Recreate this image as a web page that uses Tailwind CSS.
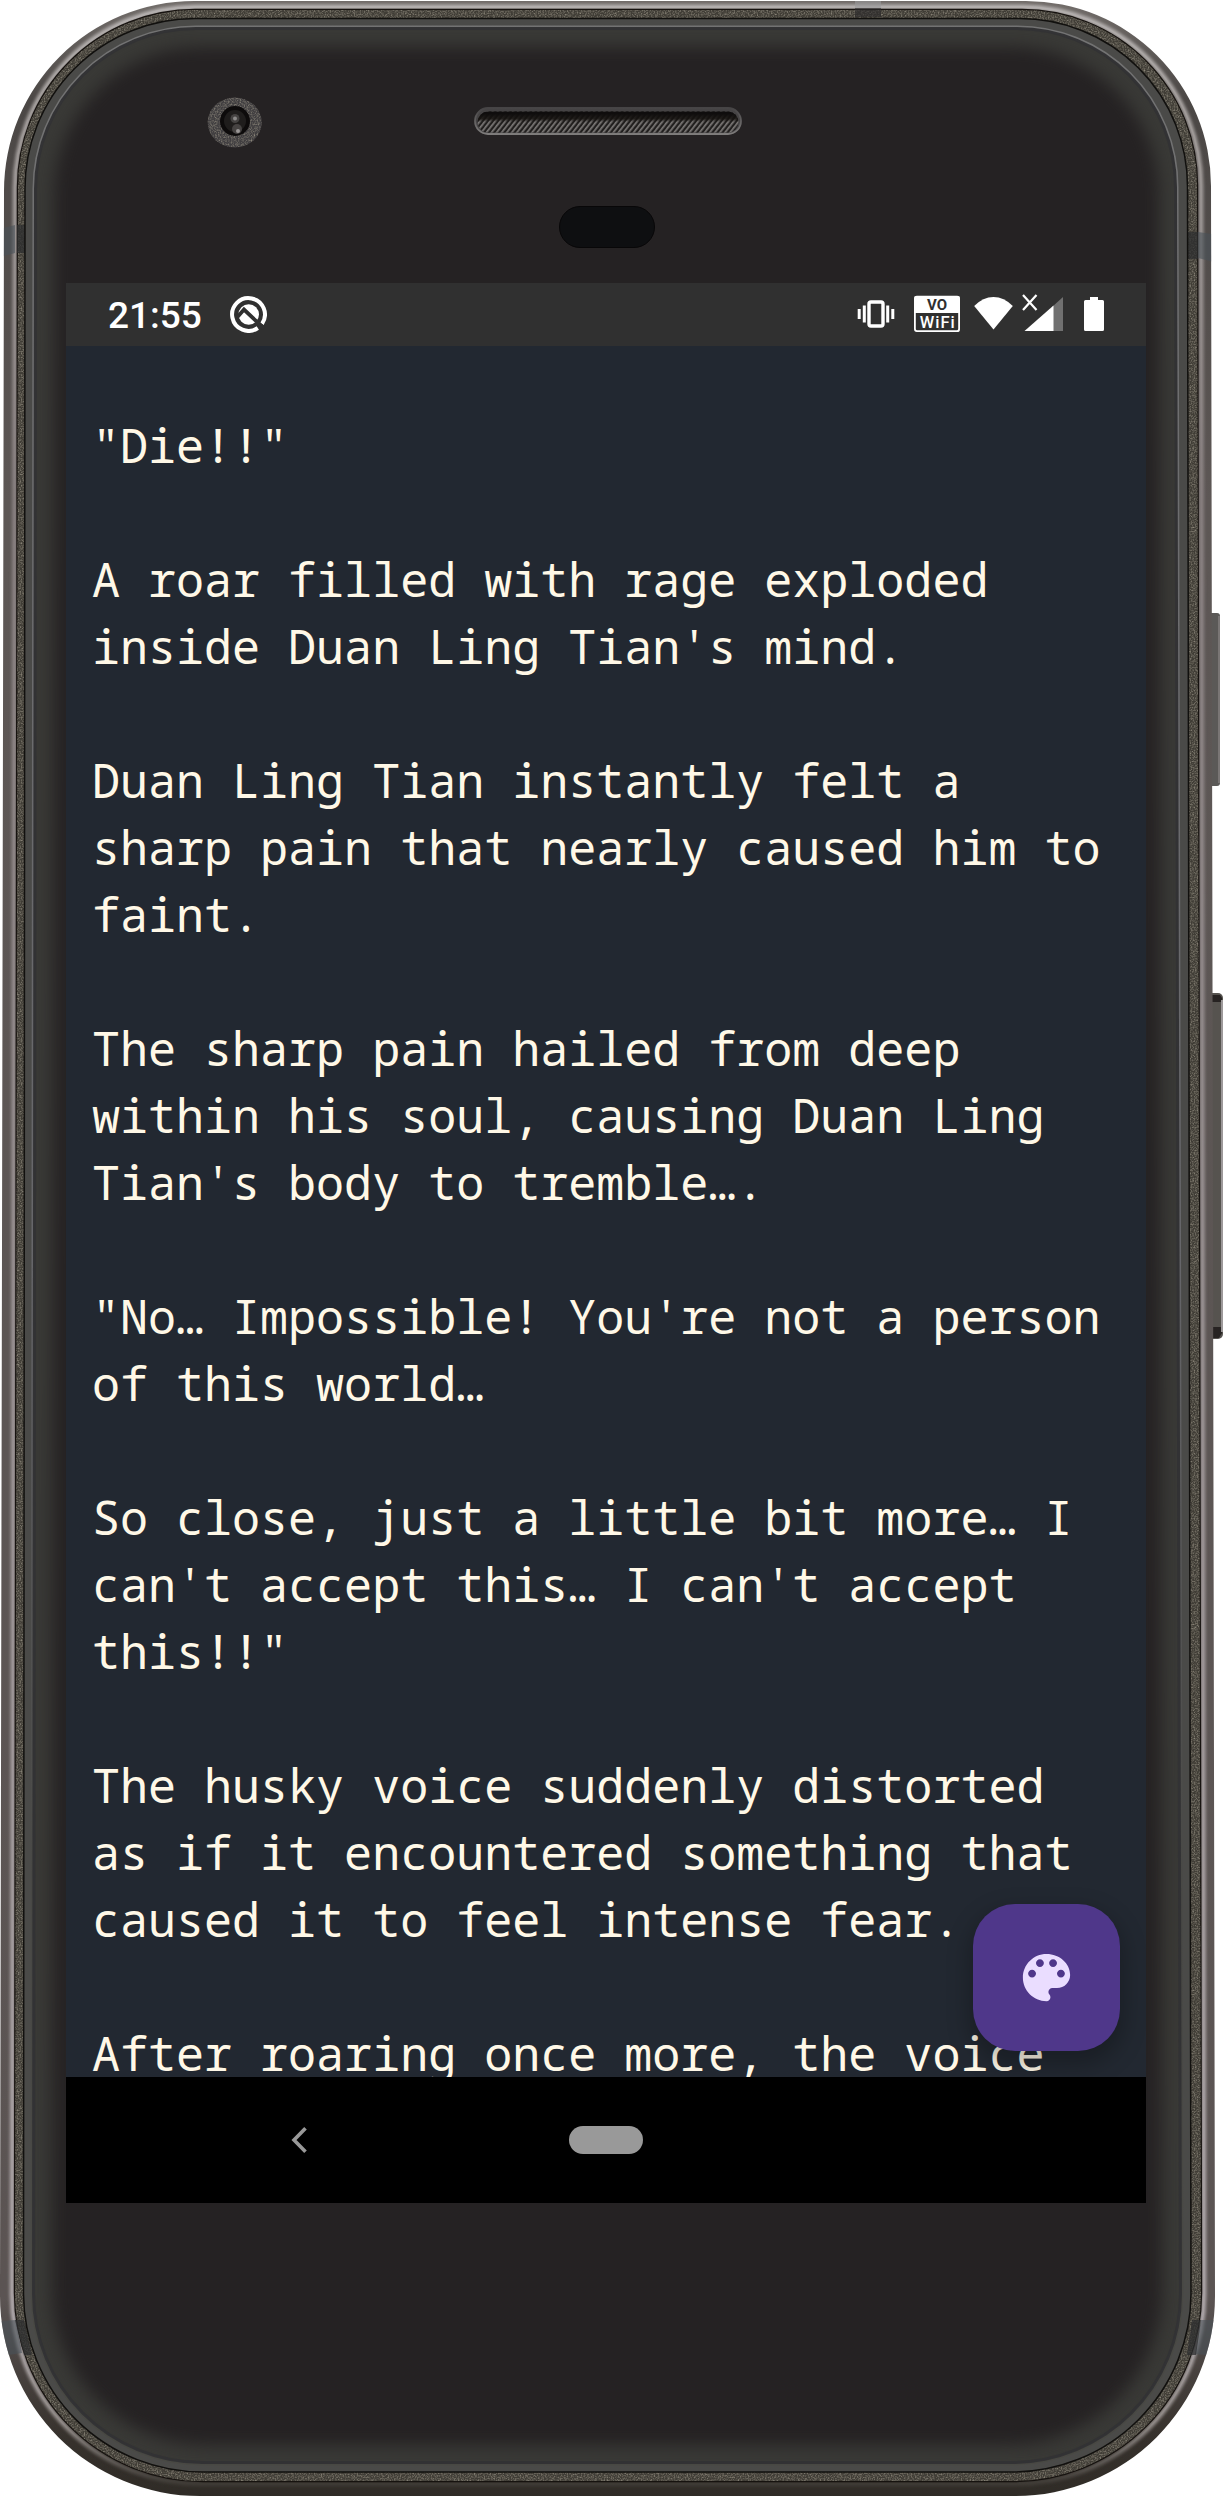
<!DOCTYPE html>
<html lang="en">
<head>
<meta charset="utf-8">
<title>Reader</title>
<script src="https://cdn.jsdelivr.net/npm/@tailwindcss/browser@4"></script>
</head>
<body class="bg-white">
<div class="relative w-[1224px] h-[2498px] overflow-hidden pl-[66px] pt-[283px]">

  <!-- Phone body -->
  <svg class="absolute inset-0" width="1224" height="2498" viewBox="0 0 1224 2498" fill="none" aria-hidden="true">
    <defs>
      <path id="outer" d="M194 1H1026A185 185 0 0 1 1211 186L1215 2296A200 200 0 0 1 1015 2496H200A200 200 0 0 1 0 2296L4 191A190 190 0 0 1 194 1Z"/>
      <path id="textured" d="M195 10H1022A175 175 0 0 1 1197 185L1201 2293A188 188 0 0 1 1013 2481H203A188 188 0 0 1 15 2293L18 187A177 177 0 0 1 195 10Z"/>
      <path id="glass" d="M196 27H1017A160 160 0 0 1 1177 187L1182 2294A170 170 0 0 1 1012 2464H202A170 170 0 0 1 32 2294L34 189A162 162 0 0 1 196 27Z"/>
      <clipPath id="outerClip"><use href="#outer"/></clipPath>
      <clipPath id="glassClip"><use href="#glass"/></clipPath>
      <linearGradient id="edge" x1="0" y1="0" x2="0" y2="2498" gradientUnits="userSpaceOnUse">
        <stop offset="0" stop-color="#726d6a"/><stop offset=".04" stop-color="#4b4745"/><stop offset=".2" stop-color="#5d5755"/><stop offset=".92" stop-color="#5b5453"/><stop offset=".975" stop-color="#37322d"/><stop offset="1" stop-color="#2f2b26"/>
      </linearGradient>
      <linearGradient id="shine" x1="0" y1="0" x2="0" y2="2498" gradientUnits="userSpaceOnUse">
        <stop offset="0" stop-color="#b5b1b0"/><stop offset=".04" stop-color="#a09b99"/><stop offset=".2" stop-color="#857d7d"/><stop offset=".93" stop-color="#a8a1a3"/><stop offset=".97" stop-color="#8d8784"/><stop offset=".995" stop-color="#3c3833"/>
      </linearGradient>
      <linearGradient id="rim" x1="0" y1="0" x2="0" y2="2498" gradientUnits="userSpaceOnUse">
        <stop offset="0" stop-color="#737373"/><stop offset=".5" stop-color="#66666a"/><stop offset=".75" stop-color="#484845"/><stop offset="1" stop-color="#484843"/>
      </linearGradient>
      <filter id="soft" x="-10%" y="-10%" width="120%" height="120%" color-interpolation-filters="sRGB"><feGaussianBlur stdDeviation="8"/></filter>
      <filter id="soft1" x="-10%" y="-10%" width="120%" height="120%" color-interpolation-filters="sRGB"><feGaussianBlur stdDeviation="1.5"/></filter>
      <filter id="grain" x="0" y="0" width="100%" height="100%" color-interpolation-filters="sRGB">
        <feTurbulence type="fractalNoise" baseFrequency=".7" numOctaves="2" seed="4"/>
        <feColorMatrix values="0 0 0 0 .55  0 0 0 0 .53  0 0 0 0 .48  2 0 0 0 -.8"/>
        <feComposite in2="SourceGraphic" operator="in" result="n"/>
        <feMerge><feMergeNode in="SourceGraphic"/><feMergeNode in="n"/></feMerge>
      </filter>
      <pattern id="mesh" width="4" height="4" patternUnits="userSpaceOnUse" patternTransform="rotate(38)"><rect width="4" height="4" fill="#211f1e"/><rect width="1.7" height="4" fill="#7c7977"/></pattern>
      <linearGradient id="speakerShade" x1="0" y1="0" x2="0" y2="1"><stop offset=".1" stop-color="#0f0d0d"/><stop offset=".35" stop-color="#15120f" stop-opacity=".85"/><stop offset=".5" stop-color="#15120f" stop-opacity="0"/></linearGradient>
      <linearGradient id="speakerRim" x1="0" y1="0" x2="0" y2="1"><stop offset="0" stop-color="#464445"/><stop offset="1" stop-color="#7e7c7b"/></linearGradient>
    </defs>

    <!-- Side keys -->
    <rect x="1206" y="613" width="14" height="173" rx="3" fill="#5b5957"/>
    <path d="M1219 616v167" stroke="#84817f" stroke-width="1.5"/>
    <rect x="1206" y="993" width="17" height="346" rx="5" fill="#56534f"/>
    <path d="M1212 995h8l2 3v4h-10zM1212 1327h10v6l-3 5h-7z" fill="#272322"/>
    <path d="M1222 1000v332" stroke="#9d999a" stroke-width="2"/>

    <use href="#outer" fill="url(#edge)"/>
    <g clip-path="url(#outerClip)">
      <path d="M195 8H1022A179 179 0 0 1 1201 187L1204 2293A190 190 0 0 1 1014 2484H202A190 190 0 0 1 12 2293L15 189A181 181 0 0 1 195 8Z" stroke="url(#edge)" stroke-width="10"/>
      <path d="M195 7H1022A179 179 0 0 1 1201 187L1204 2293A190 190 0 0 1 1014 2484H202A190 190 0 0 1 12 2293L15 189A181 181 0 0 1 195 7Z" stroke="url(#shine)" stroke-width="5" filter="url(#soft1)"/>
      <path d="M195 7H1022A179 179 0 0 1 1201 187L1204 2293A190 190 0 0 1 1014 2484H202A190 190 0 0 1 12 2293L15 189A181 181 0 0 1 195 7Z" stroke="url(#shine)" stroke-width="1.5"/>
    </g>
    <use href="#textured" fill="#4b4840" stroke="#16120f" stroke-width="2.4"/>
    <use href="#textured" fill="#403d36" filter="url(#grain)"/>

    <!-- Antenna bands -->
    <g clip-path="url(#outerClip)" fill="#4a5159" fill-opacity=".6">
      <path d="M0 229l15-4v28l-15 4zM1198 232l20 3v28l-20-5zM0 2321l16-1 6 33-20 3zM1201 2320h18l-4 36-20-2z"/>
      <path d="M17 225h8v28h-8zM1188 232h10v27h-10zM15 2320h9l8 35h-8zM1192 2320h9l-5 35h-9z" fill="#2c2d2f" fill-opacity=".75"/>
      <path d="M855 0h26v8h-26z" fill="#9a9a9b"/><path d="M855 8h26v9h-26z" fill="#2b2a2b" fill-opacity=".6"/>
    </g>

    <path d="M195 18.5H1019A168 168 0 0 1 1187.500 187L1191 2294A179 179 0 0 1 1012 2472H203A179 179 0 0 1 23.500 2294L25 189A170 170 0 0 1 195 18.500Z" fill="#4a4a48" stroke="#11100e" stroke-width="1.5"/>
    <use href="#glass" fill="#393936" stroke="url(#rim)" stroke-width="3"/>
    <g clip-path="url(#glassClip)">
      <use href="#glass" stroke="#333335" stroke-width="6"/>
      <path d="M200 47H1012A148 148 0 0 1 1159 196L1162 2286A155 155 0 0 1 1007 2445H208A155 155 0 0 1 52 2286L54 196A148 148 0 0 1 200 47Z" fill="#252223" filter="url(#soft)"/>
    </g>

    <!-- Front camera -->
    <ellipse cx="234.700" cy="122.500" rx="27" ry="25" fill="#403e40" filter="url(#grain)"/>
    <circle cx="235" cy="121" r="15" fill="#0d0b0b"/>
    <circle cx="235" cy="121" r="11" fill="#1f1d1c"/>
    <circle cx="235" cy="118.500" r="4.500" fill="#454342"/><circle cx="235" cy="118.500" r="2" fill="#8c8a89"/>
    <circle cx="237" cy="129" r="5" fill="#464342"/><circle cx="238" cy="131" r="2" fill="#9b9897"/>

    <!-- Earpiece -->
    <rect x="475" y="108" width="266" height="26" rx="13" fill="#454344" stroke="url(#speakerRim)" stroke-width="1.800"/>
    <rect x="477.500" y="111.500" width="261" height="21" rx="10.500" fill="url(#mesh)"/>
    <rect x="477.500" y="111.500" width="261" height="21" rx="10.500" fill="url(#speakerShade)"/>

    <rect x="559.500" y="206.500" width="95" height="41" rx="20.500" fill="#0e0f11" stroke="#080708"/>
  </svg>

  <main class="relative w-[1080px] h-[1920px] flex flex-col overflow-hidden">
    <header class="h-[63px] shrink-0 bg-[#303030] text-white flex items-start pl-[42px] pr-[42px]">
      <span class="font-[Roboto,sans-serif] font-medium text-[37px] leading-[44px] pt-[10.5px] w-[122px]">21:55</span>
      <svg class="mt-[13px]" width="37" height="37" viewBox="0 0 37 37" fill="none">
        <path d="M27.800 32A16.400 16.400 0 1 1 32 27.800" stroke="#fff" stroke-width="4"/>
        <path d="M28.300 31.600L32 28.200 34 30.400 30.400 34Z" fill="#303030"/>
        <circle cx="18.700" cy="18.500" r="10.300" fill="#fff"/>
        <path d="M7 21.500L14 13.500 34 32.500" stroke="#303030" stroke-width="3.800"/>
      </svg>
      <div class="flex ml-auto pt-[11px]">
        <svg width="38" height="38" viewBox="857 294 38 38" fill="none" stroke="#fff">
          <rect x="869" y="302" width="14" height="24" rx="2" stroke-width="3.400"/>
          <path d="M864.300 305.500v17M887.700 305.500v17" stroke-width="3"/><path d="M859.200 309v10M892.800 309v10" stroke-width="3"/>
        </svg>
        <svg class="ml-[19px]" width="46" height="38" viewBox="914 294 46 38">
          <rect x="914.900" y="296.700" width="44.200" height="34.400" rx="2" fill="#303030" stroke="#fff" stroke-width="1.800"/>
          <path d="M914.500 296.500h45v16.500h-45z" fill="#fff"/>
          <text x="937" y="310" text-anchor="middle" font-family="Roboto" font-weight="700" font-size="15" fill="#303030" textLength="20">VO</text>
          <text x="937.300" y="327.700" text-anchor="middle" font-family="Roboto" font-weight="500" font-size="16.500" fill="#fff" textLength="35">WiFi</text>
        </svg>
        <svg class="ml-[14px]" width="39" height="38" viewBox="974 294 39 38">
          <path d="M974.200 306Q983 297 993.500 297T1012.800 306L993.500 329.500Z" fill="#fff"/>
        </svg>
        <svg class="ml-[9px]" width="42" height="38" viewBox="1022 294 42 38">
          <path d="M1063 297v34h-11v-24z" fill="#707070"/><path d="M1053.500 305.500V331H1024.500Z" fill="#fff"/>
          <path d="M1023 295l13.500 15M1036.500 295L1023 310" stroke="#fff" stroke-width="2.200"/>
        </svg>
        <svg class="ml-[20px]" width="20" height="38" viewBox="1084 294 20 38">
          <path d="M1090 297h8v3h4.500q1.500 0 1.500 1.500v28q0 1.500-1.500 1.500h-17q-1.500 0-1.500-1.500v-28q0-1.500 1.500-1.500h4.500z" fill="#fff"/>
        </svg>
      </div>
    </header>

    <section class="relative flex-1 min-h-0 overflow-hidden bg-[#222831]">
      <article class="pl-[26px] pt-[66px] flex flex-col gap-[67px] whitespace-pre text-[#fff8e7] text-[46.700px] leading-[67px] font-['Droid_Sans_Mono','Noto_Sans_Mono','DejaVu_Sans_Mono',monospace]">
        <p>"Die!!"</p>
        <p>A roar filled with rage exploded<br>inside Duan Ling Tian's mind.</p>
        <p>Duan Ling Tian instantly felt a<br>sharp pain that nearly caused him to<br>faint.</p>
        <p>The sharp pain hailed from deep<br>within his soul, causing Duan Ling<br>Tian's body to tremble….</p>
        <p>"No… Impossible! You're not a person<br>of this world…</p>
        <p>So close, just a little bit more… I<br>can't accept this… I can't accept<br>this!!"</p>
        <p>The husky voice suddenly distorted<br>as if it encountered something that<br>caused it to feel intense fear.</p>
        <p>After roaring once more, the voice</p>
      </article>
      <button class="absolute right-[26px] bottom-[26px] size-[147px] rounded-[42px] bg-[#4f378a] flex items-center justify-center shadow-[0_10px_22px_4px_rgba(0,0,0,0.25)]" aria-label="Theme">
        <svg width="63" height="63" viewBox="0 0 24 24" fill="#eaddff"><path d="M12 3c-4.970 0-9 4.030-9 9s4.030 9 9 9c.83 0 1.500-.67 1.500-1.500 0-.39-.15-.74-.39-1.010-.23-.26-.38-.61-.38-.99 0-.83.67-1.500 1.500-1.500H16c2.760 0 5-2.240 5-5 0-4.420-4.030-8-9-8zm-5.500 9c-.83 0-1.500-.67-1.500-1.500S5.670 9 6.500 9 8 9.670 8 10.500 7.330 12 6.500 12zm3-4C8.670 8 8 7.330 8 6.500S8.670 5 9.500 5s1.500.67 1.500 1.500S10.330 8 9.500 8zm5 0c-.83 0-1.500-.67-1.500-1.500S13.670 5 14.500 5s1.500.67 1.500 1.500S15.330 8 14.500 8zm3 4c-.83 0-1.500-.67-1.500-1.500S16.670 9 17.500 9s1.500.67 1.500 1.500-.67 1.500-1.500 1.500z"/></svg>
      </button>
    </section>

    <nav class="h-[126px] shrink-0 bg-black flex items-center pl-[225px]">
      <svg width="17" height="28" viewBox="0 0 17 28" fill="none" stroke="#999" stroke-width="3.600"><path d="M14.500 2.200L3 14 14.500 25.800"/></svg>
      <div class="ml-[261px] w-[74px] h-7 rounded-full bg-[#999]"></div>
    </nav>
  </main>
</div>
</body>
</html>
